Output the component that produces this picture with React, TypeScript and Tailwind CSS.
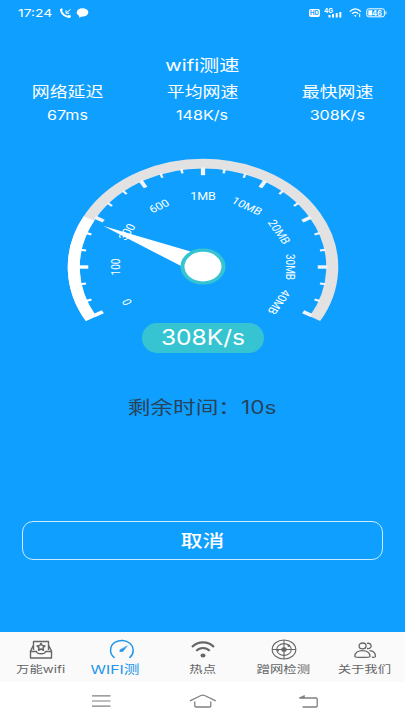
import type { ReactNode } from 'react'

const LABELS = ['0', '100', '300', '600', '1MB', '10MB', '20MB', '30MB', '40MB']

const STATS = [
  { label: '网络延迟', value: '67ms' },
  { label: '平均网速', value: '148K/s' },
  { label: '最快网速', value: '308K/s' },
]

// point on a circle around the gauge centre, 0deg = right, clockwise
function polar(r: number, deg: number) {
  const a = (deg * Math.PI) / 180
  return `${(r * Math.cos(a)).toFixed(2)} ${(r * Math.sin(a)).toFixed(2)}`
}

function arc(r: number, from: number, to: number) {
  return `M${polar(r, from)}A${r} ${r} 0 ${to - from > 180 ? 1 : 0} 1 ${polar(r, to)}`
}

function StatusBar() {
  return (
    <div className="flex h-[26px] items-center pl-[18px] pr-[18px] text-white">
      <span className="w-[34px] whitespace-nowrap text-[11px] leading-none"><span className="inline-block origin-left scale-x-[1.26]">17:24</span></span>
      <svg className="ml-[7px]" width="13" height="11" viewBox="0 0 13 11" fill="none" stroke="white">
        <path d="M2 2C2.3 6 6.5 9.2 11 9" strokeWidth="2" />
        <path d="M1.2 2.2L3.5 1.2M9.2 7.7L11.8 8.6" strokeWidth="1.8" />
        <path d="M11.5 1.5L7 5M7 2.2V5.2H10.2" strokeWidth="1" />
      </svg>
      <svg className="ml-[4px]" width="13" height="10" viewBox="0 0 13 10" fill="white">
        <ellipse cx="6.5" cy="4.4" rx="5.8" ry="4.1" />
        <path d="M3.5 7L3 9.7L7 8Z" />
      </svg>
      <div className="ml-auto flex items-center">
        <span className="flex h-[8px] w-[11px] items-center justify-center rounded-[2px] bg-white text-[6px] font-bold leading-none text-[#0fa0ff]">HD</span>
        <svg className="ml-[4px]" width="19" height="12" viewBox="0 0 19 12" fill="white">
          <text x="0" y="5.5" fontSize="6.5" fontWeight="700" textLength="9" lengthAdjust="spacingAndGlyphs">4G</text>
          <path d="M4.5 8h2v2.5h-2zM8 7h2v3.5H8zM11.7 6h2v4.5h-2zM15.3 5h2v5.5h-2z" />
        </svg>
        <svg className="ml-[6px]" width="13" height="10" viewBox="0 0 13 10" fill="none" stroke="white" strokeWidth="1.3">
          <path d="M.8 3.7C4-.1 8.6-.1 11.8 3.7M3 5.9C5 3.7 7.6 3.7 9.3 5.9" />
          <path d="M5 7.6Q6.3 6.4 7.5 7.6L6.3 9Z" fill="white" stroke="none" />
          <path d="M10.7 5.5V9.2" strokeWidth="1" />
        </svg>
        <svg className="ml-[4px]" width="21" height="10" viewBox="0 0 21 10">
          <rect x=".8" y=".8" width="17.6" height="8" rx="1.8" fill="none" stroke="white" />
          <path d="M2.3 2.2h4v5.2h-4zM19.5 3.3h.9v3h-.9z" fill="white" />
          <text x="6.3" y="7.6" fontSize="7.5" fontWeight="700" fill="white" textLength="9.5" lengthAdjust="spacingAndGlyphs">46</text>
        </svg>
      </div>
    </div>
  )
}

function Gauge() {
  return (
    <svg className="block font-[Roboto,sans-serif]" width="280" height="168" viewBox="-112 -110 224 168" preserveAspectRatio="none">
      <path d={arc(103.4, 150, 390)} fill="none" stroke="#e2e2e2" strokeWidth="9.6" />
      <path d={arc(103.4, 150, 208)} fill="none" stroke="white" strokeWidth="9.6" />
      {Array.from({ length: 25 }, (_, i) => {
        const major = i % 3 === 0
        const shift = i === 0 ? 0.8 : i === 24 ? -0.8 : 0
        const deg = 150 + i * 10 + shift
        return (
          <path
            key={i}
            d={`M${polar(99.5, deg)}L${polar(major ? 91.8 : 95, deg)}`}
            stroke={i < 6 ? 'white' : '#f1f5f9'}
            strokeWidth={major ? 3.4 : 2}
          />
        )
      })}
      {LABELS.map((label, i) => (
        <text key={label} transform={`rotate(${i * 30 - 120})`} y="-66.8" textAnchor="middle" fontSize="10" fill="white">
          {label}
        </text>
      ))}
      <path d="M-79.6 -41L-10 -15.5L-16 0Z" fill="white" />
      <circle cx="0" cy="-.4" r="16.4" fill="white" stroke="#36c4d2" strokeWidth="3.2" />
    </svg>
  )
}

function Tab({ label, icon, active }: { label: string; icon: ReactNode; active?: boolean }) {
  return (
    <div className={active ? 'flex w-[81px] flex-col items-center text-[#2196e8]' : 'flex w-[81px] flex-col items-center text-[#666666]'}>
      <div className="flex h-[28px] items-end justify-center">{icon}</div>
      <span className={active ? 'mr-[14px] mt-[1px] scale-x-[1.29] whitespace-nowrap text-[12.2px] leading-[17px]' : 'mt-[1px] scale-x-[1.25] whitespace-nowrap text-[10.7px] leading-[17px]'}>{label}</span>
    </div>
  )
}

const boxIcon = (
  <svg width="24" height="20" viewBox="0 0 24 20" fill="none" stroke="currentColor" strokeWidth="1.4" strokeLinejoin="round">
    <path d="M4.5 10V1.5H19.5V10M4.5 5L1.5 11V18H22.5V11L19.5 5M1.5 11.5H7.5C8 14.5 16 14.5 16.5 11.5H22.5" />
    <path d="M12 3.3L13.2 5.5L16 6L14 7.7L14.5 10.2L12 9L9.5 10.2L10 7.7L8 6L10.8 5.5Z" strokeWidth="1.5" />
  </svg>
)

const speedIcon = (
  <svg width="26" height="21" viewBox="0 0 26 21" fill="none" stroke="currentColor" strokeWidth="1.5" strokeLinecap="round">
    <path d="M5 18.4C-.2 14 .8 6.5 6.2 3.2C11 .4 17 1 20.8 4.2C25.4 8.2 25.2 14.8 20.8 18.4" />
    <path d="M18 7.2L13.8 12.4L10.8 12.6L11 11Z" fill="currentColor" strokeWidth=".6" />
  </svg>
)

const wifiIcon = (
  <svg width="26" height="20" viewBox="0 0 26 20" fill="none" stroke="currentColor">
    <path d="M2 7C8 .8 18 .8 24 7M6.3 10.9C10 7 16 7 19.7 10.9" strokeWidth="2.1" />
    <ellipse cx="13" cy="15.6" rx="2.5" ry="2" fill="currentColor" stroke="none" />
  </svg>
)

const radarIcon = (
  <svg width="26" height="21" viewBox="0 0 26 21" fill="none" stroke="currentColor" strokeWidth="1.1">
    <ellipse cx="13" cy="10.5" rx="11.8" ry="9.5" />
    <ellipse cx="13" cy="10.5" rx="7.3" ry="5.9" />
    <ellipse cx="13" cy="10.5" rx="2.2" ry="1.8" fill="currentColor" />
    <path d="M13 1V20M1 10.5H25" />
    <circle cx="17.8" cy="6.8" r="1.3" fill="currentColor" stroke="none" />
    <circle cx="7" cy="11.6" r="1" fill="currentColor" stroke="none" />
  </svg>
)

const usersIcon = (
  <svg width="24" height="19" viewBox="0 0 24 19" fill="none" stroke="currentColor" strokeWidth="1.3">
    <ellipse cx="9.6" cy="4.9" rx="3.5" ry="2.9" />
    <path d="M14 2.4C19.5 1.2 19.5 8.8 14 7.5" />
    <path d="M1.8 15.6C1.2 7.5 17.6 7.5 17 15.6C16.8 16.6 2 16.6 1.8 15.6Z" />
    <path d="M16.5 9.7C20.5 10 22.6 12.5 22.4 15.8C22 16.5 19.8 16.3 18.8 16.2" />
  </svg>
)

export default function App() {
  return (
    <div className="flex h-[720px] w-[405px] flex-col overflow-hidden bg-[#0fa0ff] font-[Inter,'Noto_Sans_CJK_SC',sans-serif]">
      <StatusBar />

      <h1 className="mt-[27px] flex h-[24px] items-center justify-center text-white">
        <span className="scale-x-[1.26] text-[16px] font-normal leading-none">wifi测速</span>
      </h1>

      <div className="mt-[3px] flex text-white">
        {STATS.map((s) => (
          <div key={s.label} className="flex w-[135px] flex-col items-center">
            <span className="scale-x-125 text-[14.3px] leading-[23px]">{s.label}</span>
            <span className="scale-x-[1.24] text-[13px] leading-[24px]">{s.value}</span>
          </div>
        ))}
      </div>

      <div className="mt-[30px] flex justify-center"><Gauge /></div>

      <div className="-mt-[2.5px] ml-[142px] flex h-[30px] w-[121.5px] items-center justify-center rounded-full bg-[#36c4d2]">
        <span className="scale-x-[1.17] text-[21px] leading-none text-white">308K/s</span>
      </div>

      <div className="mt-[41px] flex h-[28px] items-center justify-center">
        <span className="scale-x-[1.26] whitespace-nowrap text-[18px] leading-none text-[#26435c]">剩余时间：10s</span>
      </div>

      <button className="ml-[22px] mt-[99px] flex h-[39px] w-[361px] items-center justify-center rounded-[11px] border border-[#c9eaff] text-white">
        <span className="scale-x-125 pt-[2px] text-[17.4px] font-medium leading-none">取消</span>
      </button>

      <div className="mt-auto flex h-[50px] shrink-0 bg-[#fafafa]">
        <Tab label="万能wifi" icon={boxIcon} />
        <Tab label="WIFI测" icon={speedIcon} active />
        <Tab label="热点" icon={wifiIcon} />
        <Tab label="蹭网检测" icon={radarIcon} />
        <Tab label="关于我们" icon={usersIcon} />
      </div>

      <div className="flex h-[38px] shrink-0 items-center bg-white pl-[91px]">
        <svg width="20" height="14" viewBox="0 0 20 14" stroke="#808080" strokeWidth="1.2">
          <path d="M1 1.8H19.5M1 7H19.5M1 12.2H19.5" />
        </svg>
        <svg className="ml-[78px]" width="28" height="15" viewBox="0 0 28 15" fill="none" stroke="#808080" strokeWidth="1.3" strokeLinejoin="round">
          <path d="M1 6.8L12 1.5Q13.8 .8 15.6 1.5L26.8 6.8M5.8 7.5V12.3Q5.8 13 6.8 13H20.8Q21.8 13 21.8 12.3V7.5" />
        </svg>
        <svg className="ml-[81px]" width="22" height="15" viewBox="0 0 22 15" fill="none" stroke="#808080" strokeWidth="1.3">
          <path d="M2 4H18.2Q19.2 4 19.2 5V12Q19.2 13 18.2 13H4.5" />
          <path d="M.8 4L6.5 1.3V4Z" fill="#808080" strokeWidth=".5" />
        </svg>
      </div>
    </div>
  )
}
